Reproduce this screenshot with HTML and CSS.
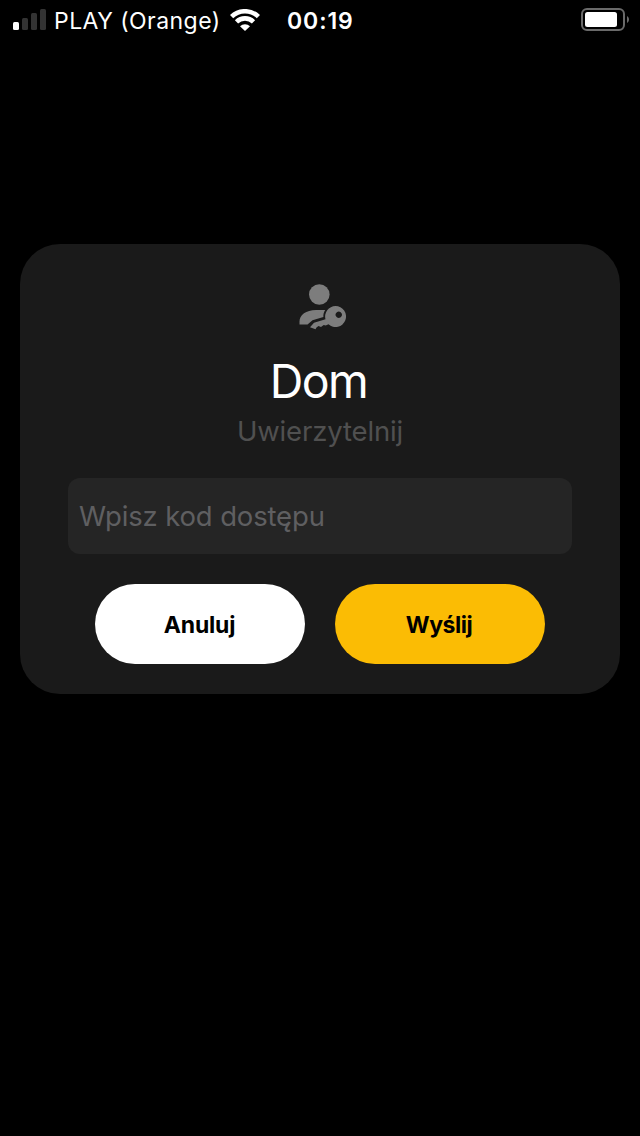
FILE: index.html
```html
<!DOCTYPE html>
<html lang="pl">
<head>
  <meta charset="UTF-8" />
  <meta name="viewport" content="width=device-width, initial-scale=1.0"/>
  <title>Dom</title>
  <link rel="stylesheet" href="styles.css">
</head>
<body>

  <!-- Status bar -->
  <header class="status-bar">
    <svg class="signal" width="33" height="21" viewBox="0 0 33 21">
      <rect x="0" y="13" width="6" height="8" rx="1.5" fill="#fff"/>
      <rect x="9" y="9" width="6" height="12" rx="1.5" fill="#333"/>
      <rect x="18" y="4" width="6" height="17" rx="1.5" fill="#333"/>
      <rect x="27" y="0" width="6" height="21" rx="1.5" fill="#333"/>
    </svg>
    <span class="carrier">PLAY (Orange)</span>
    <svg class="wifi" width="30" height="22" viewBox="0 0 30 22">
      <g fill="none" stroke="#fff" stroke-width="4.6">
        <path d="M1.6 7.7a19.2 19.2 0 0 1 26.8 0"/>
        <path d="M6.5 12.9a12.1 12.1 0 0 1 17 0"/>
      </g>
      <path d="M10 17.2a7.2 7.2 0 0 1 10 0l-5 4.800z" fill="#fff"/>
    </svg>
    <span class="time">00:19</span>
    <svg class="battery" width="48" height="23" viewBox="0 0 48 23">
      <rect x="1" y="1" width="42" height="21" rx="5" fill="none" stroke="#6a6a6a" stroke-width="2"/>
      <rect x="4" y="4" width="32" height="15" rx="2.5" fill="#fff"/>
      <path d="M46 8v7c1.3-.8 2-2 2-3.5S47.3 8.800 46 8z" fill="#6a6a6a"/>
    </svg>
  </header>

  <!-- Passcode dialog -->
  <form class="dialog">
    <svg class="user-key" width="48" height="46" viewBox="0 0 48 46">
      <g fill="#7d7d7d">
        <circle cx="21.3" cy="10.500" r="10.300"/>
        <path d="M1.5 40.500v-3C1.500 31 8 26 18 26h9.200c-1.500 2.300-2 4.500-1.800 7L14.500 36.300l-5 4.200z"/>
        <path fill-rule="evenodd" d="M37.500 22a10.500 10.500 0 1 1-7 18.300l-2.800 1.200-2-.4-2.700 2-2.500-1-2 1.300-1 1.900-5.500-2 4-4.500 11.500-3.500A10.500 10.500 0 0 1 37.500 22zM40.700 27.500a3.200 3.200 0 1 0 .1 0z"/>
      </g>
    </svg>
    <h1 class="title">Dom</h1>
    <p class="subtitle">Uwierzytelnij</p>
    <input type="password" class="code" placeholder="Wpisz kod dostępu" />
    <div class="buttons">
      <button type="button" class="btn cancel">Anuluj</button>
      <button type="button" class="btn submit">Wyślij</button>
    </div>
  </form>

</body>
</html>
```
FILE: styles.css
```css
* {
  box-sizing: border-box;
}

body {
  margin: 0;
  min-height: 1136px;
  background: #000;
  color: #fff;
  font-family: Inter, "Liberation Sans", sans-serif;
}

.status-bar {
  display: flex;
  align-items: center;
  height: 39px;
  padding: 0 11px 0 13px;
  font-size: 23px;
  line-height: 28px;
  white-space: nowrap;
}

.signal {
  margin-right: 8px;
}

.carrier {
  width: 166px;
  padding-top: 3px;
  letter-spacing: 0.45px;
}

.wifi {
  margin-left: 10px;
}

.time {
  margin-left: 27px;
  padding-top: 3px;
  font-weight: 600;
  letter-spacing: 0.9px;
}

.battery {
  margin-left: auto;
}

.dialog {
  display: flex;
  flex-direction: column;
  align-items: center;
  width: 600px;
  height: 450px;
  margin: 205px auto 0;
  padding-top: 40px;
  border-radius: 40px;
  background: #1a1a1a;
}

.user-key {
  margin-left: 4px;
}

.title {
  margin: 22px 3px 0 0;
  font-size: 46.5px;
  font-weight: 400;
  letter-spacing: -1.5px;
  line-height: 58px;
}

.subtitle {
  margin: 4px 0 0;
  color: #505050;
  font-size: 27.5px;
  letter-spacing: -0.15px;
  line-height: 34px;
}

.code {
  width: 504px;
  height: 76px;
  margin-top: 30px;
  padding: 0 11px;
  border: none;
  border-radius: 12px;
  background: #252525;
  color: #fff;
  font-family: inherit;
  font-size: 27.5px;
  letter-spacing: -0.15px;
}

.code::placeholder {
  color: #5f5f61;
}

.buttons {
  display: flex;
  gap: 30px;
  margin-top: 30px;
}

.btn {
  width: 210px;
  height: 80px;
  padding: 2px 1px 0 0;
  border: none;
  border-radius: 40px;
  color: #000;
  font-family: inherit;
  font-size: 23px;
  font-weight: 700;
  letter-spacing: -0.2px;
}

.cancel {
  background: #fff;
}

.submit {
  padding-right: 2px;
  background: #fbbc04;
  letter-spacing: -0.5px;
}
```
